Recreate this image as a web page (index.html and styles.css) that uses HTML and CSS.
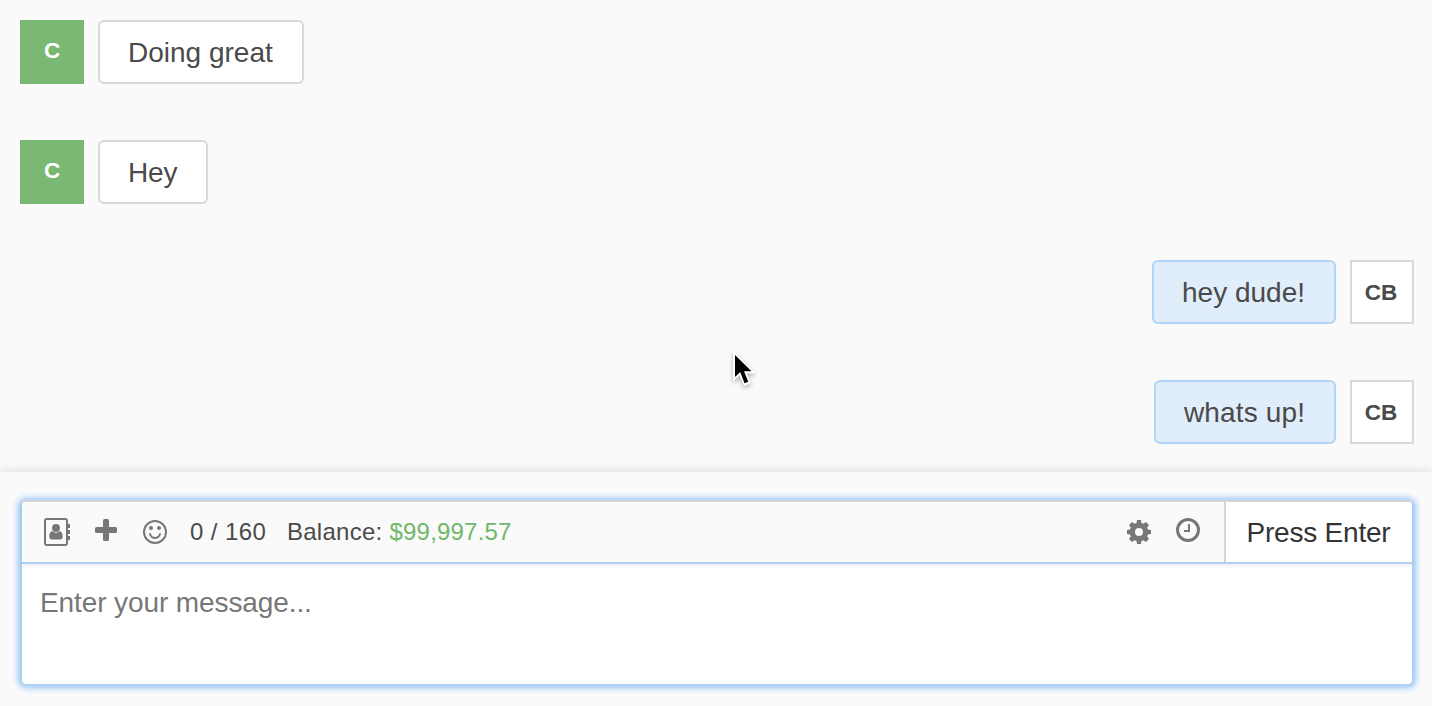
FILE: index.html
```html
<!DOCTYPE html>
<html lang="en">
<head>
<meta charset="utf-8">
<title>Messages</title>
<link rel="stylesheet" href="styles.css">
</head>
<body>
<main class="chat">
  <section class="messages">
    <div class="message">
      <div class="avatar avatar-contact">C</div>
      <div class="bubble bubble-great">Doing great</div>
    </div>
    <div class="message">
      <div class="avatar avatar-contact">C</div>
      <div class="bubble bubble-hey">Hey</div>
    </div>
    <div class="message message-own">
      <div class="bubble bubble-own bubble-dude">hey dude!</div>
      <div class="avatar avatar-own">CB</div>
    </div>
    <div class="message message-own">
      <div class="bubble bubble-own bubble-whats">whats up!</div>
      <div class="avatar avatar-own">CB</div>
    </div>
  </section>
  <section class="footer">
    <div class="composer">
      <div class="toolbar">
        <div class="tools">
          <svg class="icon icon-book" width="27" height="28" viewBox="0 0 27 28">
            <rect x="1" y="1" width="22" height="26" rx="2" fill="none" stroke="#777" stroke-width="2"/>
            <path d="M24 6h2v4h-2zM24 12h2v4h-2zM24 18h2v4h-2z" fill="#777"/>
            <circle cx="12" cy="10" r="4" fill="#777"/>
            <path d="M8.200 13C6.400 13.500 5.300 15.400 5.300 18.500C5.300 20.700 6.300 21.500 8 21.500H16C17.700 21.500 18.700 20.700 18.700 18.500C18.700 15.400 17.600 13.500 15.800 13C13.600 15.200 10.400 15.200 8.200 13Z" fill="#777"/>
          </svg>
          <svg class="icon icon-plus" width="22" height="22" viewBox="0 0 22 22">
            <path d="M9.500 0h3Q14 0 14 1.500V8h6.500Q22 8 22 9.500v3Q22 14 20.500 14H14v6.500Q14 22 12.500 22h-3Q8 22 8 20.500V14H1.500Q0 14 0 12.500v-3Q0 8 1.500 8H8V1.500Q8 0 9.500 0Z" fill="#777"/>
          </svg>
          <svg class="icon icon-smile" width="24" height="24" viewBox="0 0 24 24">
            <circle cx="12" cy="12" r="11" fill="none" stroke="#777" stroke-width="2"/>
            <circle cx="8" cy="8" r="2" fill="#777"/>
            <circle cx="16" cy="8" r="2" fill="#777"/>
            <path d="M7 14Q8.300 18 12 18T17 14" fill="none" stroke="#777" stroke-width="2" stroke-linecap="round"/>
          </svg>
          <span class="counter">0 / 160</span>
          <span class="balance">Balance:</span>
          <span class="amount">$99,997.57</span>
        </div>
        <div class="options">
          <svg class="icon icon-gear" width="24" height="24" viewBox="0 0 24 24">
            <path fill="#777" fill-rule="evenodd" d="M10 0h4l.5 3 1.800.8 2.700-1.800 3 3-1.800 2.700.8 1.800 3 .5v4l-3 .5-.8 1.800L22 19l-3 3-2.700-1.800-1.800.8-.5 3h-4l-.5-3-1.800-.8L5 22l-3-3 1.800-2.700-.8-1.800-3-.5v-4l3-.5.8-1.800L2 5l3-3 2.700 1.800L9.500 3ZM12 8a4 4 0 1 0 0 8 4 4 0 0 0 0-8Z"/>
          </svg>
          <svg class="icon icon-clock" width="24" height="24" viewBox="0 0 24 24">
            <circle cx="12" cy="12" r="10.500" fill="none" stroke="#777" stroke-width="3"/>
            <path d="M13 6v7H8" fill="none" stroke="#777" stroke-width="2"/>
          </svg>
        </div>
        <button class="send" type="button">Press Enter</button>
      </div>
      <textarea class="input" placeholder="Enter your message..."></textarea>
    </div>
  </section>
  <svg class="pointer" width="34" height="44" viewBox="0 0 34 44">
    <path d="M5 3V34.500L11.500 28.500L16 39L23 36.300L18.800 26.500H28Z" fill="#fff"/>
    <path d="M7 8V30L12.200 25L16.500 36.300L20.300 34.800L16 24.200H23.500Z" fill="#000"/>
  </svg>
</main>
</body>
</html>
```
FILE: styles.css
```css
* { box-sizing: border-box; }
body {
  margin: 0;
  background: #fafafa;
  color: #4a4a4a;
  font-family: "Liberation Sans", Arial, sans-serif;
}
.chat {
  position: relative;
  display: flex;
  flex-direction: column;
  height: 706px;
  overflow: hidden;
}
.messages {
  display: flex;
  flex-direction: column;
  gap: 56px;
  height: 472px;
  padding: 20px 18px 0 20px;
}
.message { display: flex; gap: 14px; }
.message-own { justify-content: flex-end; }
.avatar {
  display: flex;
  align-items: center;
  justify-content: center;
  width: 64px;
  height: 64px;
  font-size: 22.500px;
  font-weight: bold;
}
.avatar-contact { background: #7ab873; color: #fff; padding-bottom: 2px; }
.avatar-own { background: #fff; border: 2px solid #d9d9d9; padding: 1px 2px 0 0; }
.bubble {
  height: 64px;
  padding: 0 28px;
  border: 2px solid #d9d9d9;
  border-radius: 6px;
  background: #fff;
  font-size: 28px;
  line-height: 61px;
  white-space: nowrap;
}
.bubble-great { width: 206px; }
.bubble-hey { width: 110px; letter-spacing: -0.2px; }
.bubble-own { padding: 0 27px 0 28px; background: #e0edfa; border-color: #b0d5f7; }
.bubble-dude { width: 184px; }
.bubble-whats { width: 182px; letter-spacing: 0.15px; }
.footer {
  height: 234px;
  padding: 28px 18px 20px 20px;
  background: #fafafa;
  box-shadow: 0 0 10px rgba(0, 0, 0, 0.14);
}
.composer {
  display: flex;
  flex-direction: column;
  height: 186px;
  border: 2px solid #aed0f5;
  border-top-color: #d5d5d5;
  border-radius: 6px;
  background: #fff;
  box-shadow: 0 0 6px 2px #94c5f8;
}
.toolbar {
  display: flex;
  flex: none;
  height: 62px;
  border-bottom: 2px solid #aed0f5;
  border-radius: 4px 4px 0 0;
  background: #fafafa;
  box-shadow: 0 2px 4px rgba(0, 0, 0, 0.07);
}
.tools { display: flex; align-items: center; flex: 1; padding-left: 22px; font-size: 24px; white-space: nowrap; }
.icon { display: block; flex: none; }
.icon-plus { margin: 0 26px 5px 24px; }
.icon-smile { margin-right: 23px; }
.counter { width: 97px; letter-spacing: 0.4px; }
.balance { width: 102.500px; letter-spacing: 0.25px; }
.amount { color: #71b76b; letter-spacing: 0.2px; }
.options { display: flex; align-items: center; gap: 25px; padding-right: 24px; }
.icon-clock { margin-bottom: 4px; }
.send {
  width: 188px;
  padding: 2px 2px 0 1px;
  border: 0;
  border-left: 2px solid #d5d5d5;
  border-radius: 0 4px 0 0;
  background: #fff;
  color: #333;
  font: 28px "Liberation Sans", Arial, sans-serif;
  letter-spacing: -0.22px;
}
.input {
  flex: 1;
  width: 100%;
  padding: 23px 18px;
  border: 0;
  outline: 0;
  background: transparent;
  resize: none;
  font: 28px/32px "Liberation Sans", Arial, sans-serif;
  letter-spacing: -0.1px;
}
.input::placeholder { color: #777; opacity: 1; }
/* Mouse pointer over the conversation */
.pointer {
  position: absolute;
  left: 728px;
  top: 347px;
  filter: drop-shadow(0 2px 2px rgba(0, 0, 0, 0.3));
}
```
